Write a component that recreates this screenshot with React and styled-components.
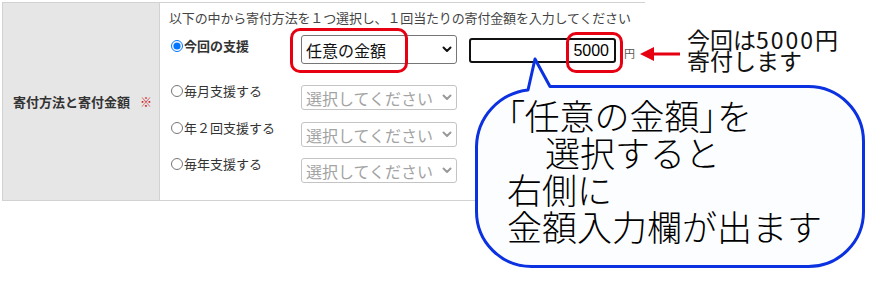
import styled, { createGlobalStyle } from "styled-components";

const GlobalStyle = createGlobalStyle`
  html, body {
    margin: 0;
    padding: 0;
    background: #fff;
  }
  body {
    font-family: "Noto Sans CJK JP", "Noto Sans", sans-serif;
    color: #333;
  }
`;

const rows = [
  { id: "once", label: "今回の支援", checked: true },
  { id: "monthly", label: "毎月支援する" },
  { id: "twice", label: "年２回支援する" },
  { id: "yearly", label: "毎年支援する" },
];

function Chevron({ color }) {
  return (
    <svg width="10" height="7" viewBox="0 0 10 7">
      <path
        d="M1.5 1.5 L5 5 L8.5 1.5"
        fill="none"
        stroke={color}
        strokeWidth="2"
        strokeLinecap="round"
        strokeLinejoin="round"
      />
    </svg>
  );
}

export default function App() {
  return (
    <Page>
      <GlobalStyle />
      <Table>
        <LabelCell>
          寄付方法と寄付金額<Required>※</Required>
        </LabelCell>
        <ContentCell>
          <Instruction>
            以下の中から寄付方法を１つ選択し、１回当たりの寄付金額を入力してください
          </Instruction>
          {rows.map((row, i) => (
            <Row key={row.id} $index={i}>
              <RadioLabel $first={i === 0} $bold={row.checked}>
                <Radio type="radio" name="method" defaultChecked={row.checked} />
                {row.label}
              </RadioLabel>
              {row.checked ? (
                <>
                  <FakeSelect $tall>
                    任意の金額
                    <Chevron color="#111" />
                  </FakeSelect>
                  <AmountInput type="text" readOnly value="5000" />
                  <Yen>円</Yen>
                </>
              ) : (
                <FakeSelect $disabled>
                  選択してください
                  <Chevron color="#9a9a9a" />
                </FakeSelect>
              )}
            </Row>
          ))}
        </ContentCell>
      </Table>

      <Highlight $x={290} $y={28} $w={118} $h={45} />
      <Highlight $x={566} $y={32} $w={57} $h={41} />

      <Arrow width="40" height="16" viewBox="0 0 40 16">
        <polygon points="0,8 14,1 14,15" fill="#e60012" />
        <rect x="13" y="6.5" width="27" height="3" fill="#e60012" />
      </Arrow>
      <Note>
        今回は<Digits>5000</Digits>円
        <br />
        寄付します
      </Note>

      <Bubble>
        <BubbleShape width="400" height="220" viewBox="0 0 400 220">
          <path
            d="M80 32.5 L338.5 32.5 A55 55 0 0 1 393.5 87.5 L393.5 157.5 A55 55 0 0 1 338.5 212.5 L61.5 212.5 A55 55 0 0 1 6.5 157.5 L6.5 92.5 A58 58 0 0 1 58 36 L65 5 Z"
            fill="#fbfdff"
            stroke="#0b31e0"
            strokeWidth="3"
            strokeLinejoin="round"
          />
        </BubbleShape>
        <BubbleText>
          <BubbleLine>
            <Bracket>「</Bracket>任意の金額<Bracket>」</Bracket>を
          </BubbleLine>
          <BubbleLine $indent={38}>選択すると</BubbleLine>
          <BubbleLine>右側に</BubbleLine>
          <BubbleLine>金額入力欄が出ます</BubbleLine>
        </BubbleText>
      </Bubble>
    </Page>
  );
}

const Page = styled.div`
  position: relative;
  width: 892px;
  height: 288px;
  padding: 2px 0 0 2px;
  box-sizing: border-box;
  overflow: hidden;
`;

const Table = styled.div`
  display: flex;
  width: 642px;
  border-top: 1px solid #d2d2d2;
  border-bottom: 1px solid #d2d2d2;
  border-left: 1px solid #d2d2d2;
`;

const LabelCell = styled.div`
  width: 157px;
  flex-shrink: 0;
  box-sizing: border-box;
  display: flex;
  align-items: center;
  padding-left: 10px;
  background: #e6e6e6;
  border-right: 1px solid #d2d2d2;
  font-size: 13px;
  font-weight: 700;
  color: #333;
`;

const Required = styled.span`
  margin-left: 10px;
  color: #d0121b;
  font-weight: 400;
  font-size: 12px;
`;

const ContentCell = styled.div`
  flex: 1;
  padding: 6px 0 17px 9px;
`;

const Instruction = styled.p`
  margin: 0;
  font-size: 13px;
  line-height: 18px;
  color: #444;
  letter-spacing: -0.15px;
`;

const Row = styled.div`
  display: flex;
  align-items: flex-start;
  margin-top: ${(p) =>
    p.$index === 0 ? 8 : p.$index === 1 ? 21 : p.$index === 2 ? 12 : 11}px;
`;

const RadioLabel = styled.label`
  width: 132px;
  flex-shrink: 0;
  display: flex;
  align-items: center;
  margin-top: ${(p) => (p.$first ? 2 : -3)}px;
  font-size: 13px;
  line-height: 18px;
  font-weight: ${(p) => (p.$bold ? 700 : 400)};
  color: #333;
`;

const Radio = styled.input`
  width: 12px;
  height: 12px;
  margin: 0 1px 0 2px;
  accent-color: #0075ff;
`;

const FakeSelect = styled.div`
  width: 156px;
  height: ${(p) => (p.$tall ? 29 : 25)}px;
  box-sizing: border-box;
  display: flex;
  align-items: center;
  justify-content: space-between;
  padding: 0 4px;
  border: 1px solid ${(p) => (p.$disabled ? "#c4c4c4" : "#767676")};
  border-radius: 3px;
  background: #fff;
  font-size: 16px;
  color: ${(p) => (p.$disabled ? "#a3a3a3" : "#111")};
  white-space: nowrap;
`;

const AmountInput = styled.input`
  width: 147px;
  height: 25px;
  box-sizing: border-box;
  margin: 3px 0 0 12px;
  padding: 0 5px 0 0;
  border: 2px solid #111;
  border-radius: 3px;
  text-align: right;
  font-family: "Liberation Sans", Arial, sans-serif;
  font-size: 16px;
  color: #000;
  outline: none;
`;

const Yen = styled.span`
  margin: 12px 0 0 8px;
  font-size: 11px;
  line-height: 13px;
  color: #555;
`;

const Highlight = styled.div`
  position: absolute;
  left: ${(p) => p.$x}px;
  top: ${(p) => p.$y}px;
  width: ${(p) => p.$w}px;
  height: ${(p) => p.$h}px;
  box-sizing: border-box;
  border: 3px solid #e60012;
  border-radius: 10px;
`;

const Arrow = styled.svg`
  position: absolute;
  left: 640px;
  top: 46px;
`;

const Note = styled.div`
  position: absolute;
  left: 687px;
  top: 29px;
  font-size: 23px;
  line-height: 21px;
  color: #111;
`;

const Digits = styled.span`
  letter-spacing: 2px;
`;

const Bubble = styled.div`
  position: absolute;
  left: 470px;
  top: 54px;
  width: 400px;
  height: 220px;
`;

const BubbleShape = styled.svg`
  position: absolute;
  left: 0;
  top: 0;
`;

const BubbleText = styled.div`
  position: relative;
  padding: 42px 0 0 37px;
  font-size: 35px;
  font-weight: 300;
  line-height: 37px;
  color: #000;
  white-space: nowrap;
`;

const BubbleLine = styled.div`
  padding-left: ${(p) => p.$indent || 0}px;
`;

const Bracket = styled.span`
  font-feature-settings: "palt";
`;
